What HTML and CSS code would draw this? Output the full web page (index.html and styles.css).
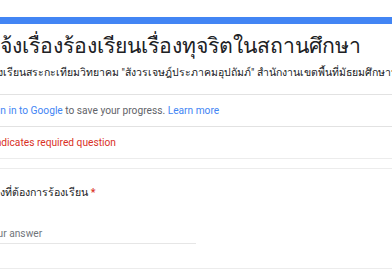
FILE: index.html
```html
<!DOCTYPE html>
<html lang="th">
<head>
<meta charset="utf-8">
<link rel="stylesheet" href="styles.css">
</head>
<body>
<div class="page">
  <div class="card card-head">
    <div class="head-main">
      <h1 class="form-title">แจ้งเรื่องร้องเรียนเรื่องทุจริตในสถานศึกษา</h1>
      <div class="form-desc">โรงเรียนสระกะเทียมวิทยาคม "สังวรเจษฎ์ประภาคมอุปถัมภ์" สำนักงานเขตพื้นที่มัธยมศึกษานครปฐม</div>
    </div>
    <div class="head-row"><a class="link">Sign in to Google</a> to save your progress. <a class="link">Learn more</a></div>
    <div class="head-row required">* Indicates required question</div>
  </div>
  <div class="card card-q">
    <div class="q-title">เรื่องที่ต้องการร้องเรียน <span class="star">*</span></div>
    <div class="q-input">Your answer</div>
  </div>
</div>
</body>
</html>
```
FILE: styles.css
```css
html, body {
  margin: 0;
  padding: 0;
  background: #ffffff;
  overflow: hidden;
}
body {
  font-family: Roboto, "Noto Sans", sans-serif;
  color: #202124;
}
.page {
  margin-left: -14px;
  width: 440px;
  padding-top: 17px;
}
.card {
  background: #fff;
  border-bottom: 1px solid #ececec;
}
.card-head {
  border-top: 7px solid #4285f4;
}
.head-main {
  padding: 6px 0 14px 0;
  border-bottom: 1px solid #e2e2e2;
}
.form-title {
  margin: 0;
  font-size: 21.2px;
  line-height: 32px;
  font-weight: 400;
  color: #202124;
  white-space: nowrap;
}
.form-desc {
  margin-top: 4px;
  font-size: 10.5px;
  line-height: 14px;
  white-space: nowrap;
  color: #202124;
}
.head-row {
  height: 31px;
  line-height: 31px;
  font-size: 10.2px;
  color: #5f6368;
  white-space: nowrap;
  border-bottom: 1px solid #e2e2e2;
}
.head-row.required {
  color: #d93025;
  border-bottom: none;
}
.link {
  color: #4285f4;
}
.card-q {
  margin-top: 9px;
  border-top: 1px solid #ececec;
  padding: 16px 0 24px 0;
}
.q-title {
  margin-left: -2px;
  font-size: 10.6px;
  line-height: 16px;
  font-weight: 500;
  white-space: nowrap;
}
.star {
  color: #d93025;
}
.q-input {
  margin-top: 26px;
  width: 210px;
  font-size: 10.2px;
  line-height: 14px;
  color: #70757a;
  padding-bottom: 2px;
  border-bottom: 1px solid #e6e6e6;
}
```
